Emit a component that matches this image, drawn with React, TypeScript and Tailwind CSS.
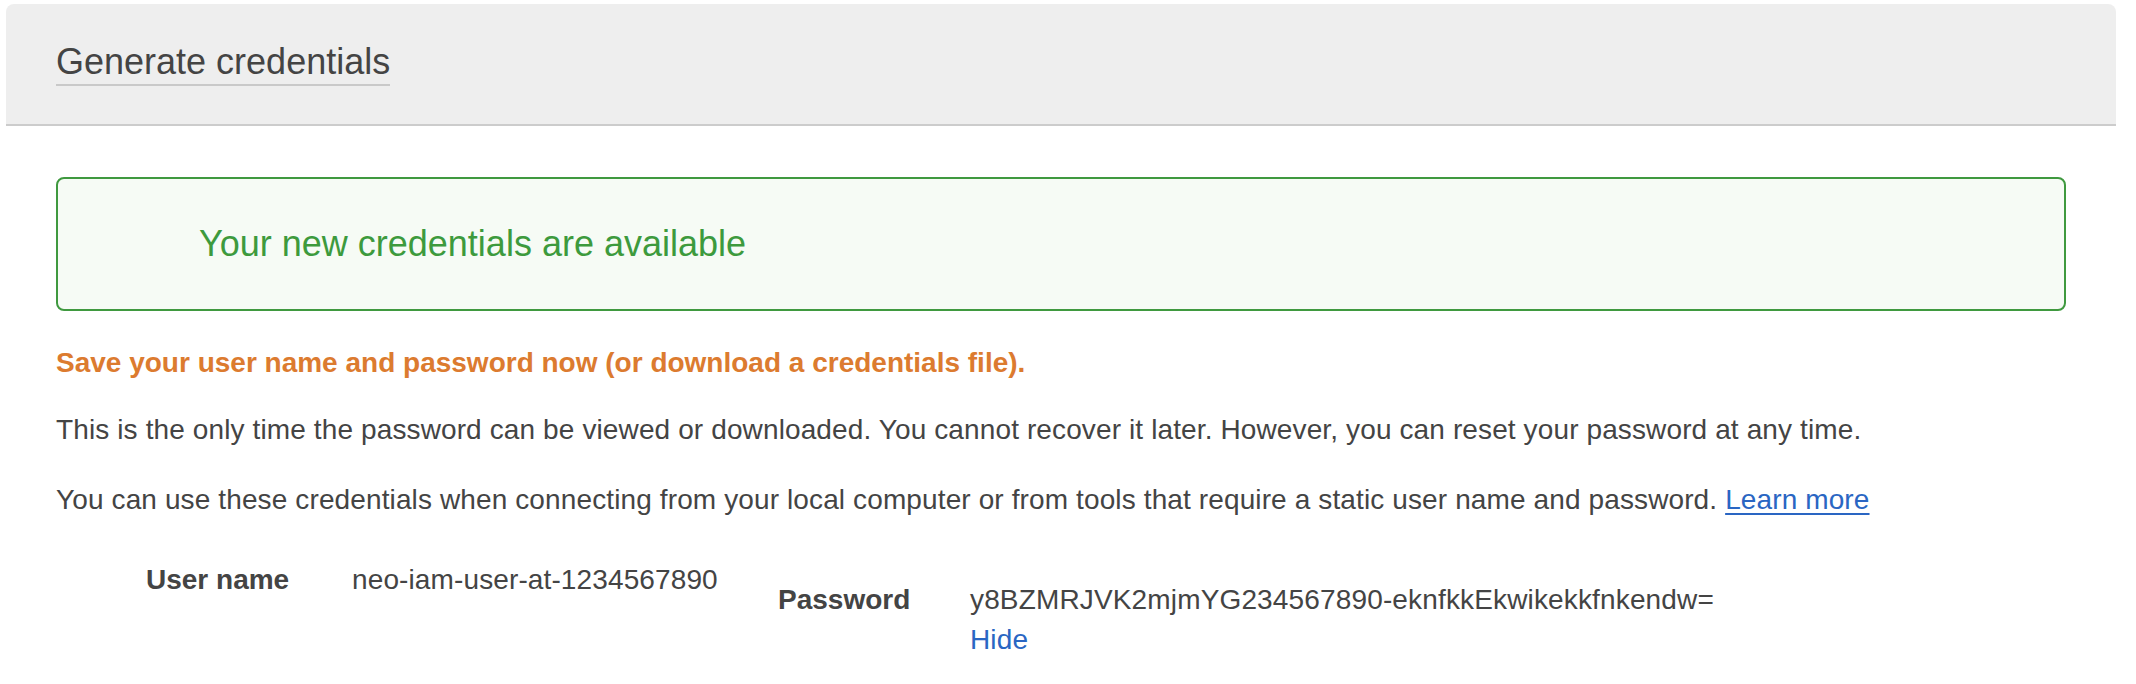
import React from "react";

export default function App() {
  return (
    <div
      className="w-full bg-white pt-[4px] pl-[6px] pr-[20px] text-[#444444]"
      style={{ fontFamily: '"Liberation Sans", Arial, Helvetica, sans-serif' }}
    >
      <div className="h-[122px] rounded-t-[8px] border-b-2 border-[#cccccc] bg-[#eeeeee] pt-[36px] pl-[50px]">
        <span className="inline-block border-b-2 border-[#c9c9c9] text-[36px] leading-[44px] text-[#444444]">
          Generate credentials
        </span>
      </div>

      <div className="px-[50px]">
        <div className="mt-[51px] flex h-[134px] items-center rounded-[8px] border-2 border-[#3f993f] bg-[#f6fbf5] pl-[141px]">
          <span className="text-[36px] leading-[44px] text-[#3d9a3d]">
            Your new credentials are available
          </span>
        </div>

        <p className="mt-[32px] text-[28px] font-bold leading-[40px] text-[#dc7b2f]">
          Save your user name and password now (or download a credentials file).
        </p>

        <p className="mt-[27px] text-[28px] leading-[40px] tracking-[0.12px]">
          This is the only time the password can be viewed or downloaded. You cannot recover it later. However, you can
          reset your password at any time.
        </p>

        <p className="mt-[30px] text-[28px] leading-[40px] tracking-[0.12px]">
          You can use these credentials when connecting from your local computer or from tools that require a static user
          name and password.{" "}
          <a href="#" className="text-[#2a66c3] underline decoration-2 underline-offset-[4px]">
            Learn more
          </a>
        </p>

        <div className="mt-[40px] ml-[90px] flex text-[28px] leading-[40px]">
          <div className="w-[206px] font-bold">User name</div>
          <div className="w-[426px] tracking-[0.12px]">neo-iam-user-at-1234567890</div>
          <div className="flex pt-[20px]">
            <div className="w-[192px] font-bold">Password</div>
            <div className="flex flex-col tracking-[0.15px]">
              <span>y8BZMRJVK2mjmYG234567890-eknfkkEkwikekkfnkendw=</span>
              <a href="#" className="text-[#2a66c3]">
                Hide
              </a>
            </div>
          </div>
        </div>
      </div>
    </div>
  );
}
